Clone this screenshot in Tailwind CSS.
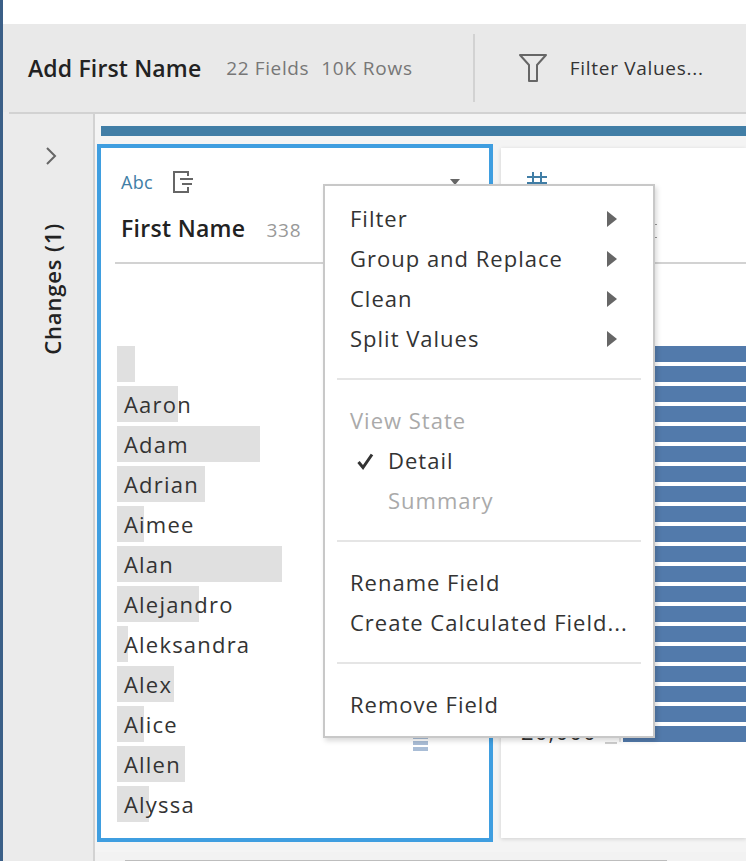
<!DOCTYPE html>
<html lang="en">
<head>
  <meta charset="UTF-8" />
  <title>Add First Name</title>
  <script src="https://cdn.jsdelivr.net/npm/@tailwindcss/browser@4"></script>
</head>
<body class="w-[746px] h-[861px] overflow-hidden bg-white font-['Open_Sans',sans-serif] text-[#333]">
  <div class="relative flex h-full w-full">
    <!-- left edge -->
    <div class="w-[3px] shrink-0 bg-[#3b5f87]"></div>

    <div class="flex min-w-0 flex-1 flex-col">
      <div class="h-6 shrink-0 bg-white"></div>

      <!-- toolbar -->
      <div class="flex h-[88px] shrink-0 items-center bg-[#e9e9e9] pl-[25px] whitespace-nowrap">
        <span class="text-[23px] leading-none font-semibold tracking-[0.15px] text-[#222]">Add First Name</span>
        <span class="ml-[25px] text-[19px] tracking-[0.6px] text-[#777]">22 Fields</span>
        <span class="ml-3 text-[19px] tracking-[0.8px] text-[#777]">10K Rows</span>
        <div class="ml-[60px] h-[68px] w-0.5 bg-[#d2d2d2]"></div>
        <svg class="ml-11 h-7 w-7" viewBox="0 0 28 28" fill="none" stroke="#666" stroke-width="2" stroke-linejoin="round"><path d="M1 1h26L18 11v16h-8V11z"/></svg>
        <span class="ml-[23px] text-[19px] tracking-[0.7px] text-[#333]">Filter Values...</span>
      </div>

      <div class="flex min-h-0 flex-1 bg-[#ebebeb]">
        <!-- changes rail -->
        <div class="ml-1.5 flex w-[86px] shrink-0 flex-col items-center border-t-2 border-r-2 border-[#d2d2d2] pt-[33px]">
          <svg class="h-[18px] w-3" viewBox="0 0 12 18" fill="none" stroke="#666" stroke-width="2"><path d="M2 1l8 8-8 8"/></svg>
          <span class="ml-0.5 mt-[58px] text-[22px] leading-none font-semibold tracking-[0.85px] text-[#222] whitespace-nowrap [writing-mode:vertical-rl] rotate-180">Changes (1)</span>
        </div>

        <!-- profile pane -->
        <div class="flex min-w-0 flex-1 flex-col border-t-2 border-[#d2d2d2] bg-[#f4f4f4]">
          <div class="ml-1.5 mt-3 h-2.5 shrink-0 bg-[#417ea6]"></div>
          <div class="mt-2 flex gap-2 pl-[2px]">
            <!-- First Name card -->
            <div class="relative h-[698px] w-[396px] shrink-0 border-4 border-[#3f9ee0] bg-white">
              <div class="flex h-[114px] flex-col pl-5 pr-[29px]">
                <div class="mt-[23px] flex h-[22px] items-center">
                  <span class="text-[18px] leading-none tracking-[0.3px] text-[#417ea6]">Abc</span>
                  <svg class="ml-5 h-[22px] w-[21px]" viewBox="0 0 21 22" fill="none" stroke="#666" stroke-width="2"><path d="M15 5V1H1v20h14v-5M7 8h13M9 13h10"/></svg>
                  <div class="ml-auto h-0 w-0 border-x-[5px] border-t-[6px] border-x-transparent border-t-[#666]"></div>
                </div>
                <div class="mt-6 flex items-baseline whitespace-nowrap">
                  <span class="text-[23px] leading-none font-semibold tracking-[0.3px] text-[#222]">First Name</span>
                  <span class="ml-[21px] text-[19px] leading-none tracking-[0.8px] text-[#999]">338</span>
                </div>
              </div>
              <div class="mx-3.5 h-0.5 bg-[#d2d2d2]"></div>
              <div class="mt-[82px] flex flex-col gap-1 pl-4 text-[22px] leading-none tracking-[1.2px]">
                <div class="h-9 w-[18px] bg-[#e0e0e0]"></div>
                <div class="relative h-9 w-[61px] bg-[#e0e0e0]"><span class="absolute left-[7px] top-[7px]">Aaron</span></div>
                <div class="relative h-9 w-[143px] bg-[#e0e0e0]"><span class="absolute left-[7px] top-[7px]">Adam</span></div>
                <div class="relative h-9 w-[88px] bg-[#e0e0e0]"><span class="absolute left-[7px] top-[7px]">Adrian</span></div>
                <div class="relative h-9 w-[27px] bg-[#e0e0e0]"><span class="absolute left-[7px] top-[7px]">Aimee</span></div>
                <div class="relative h-9 w-[165px] bg-[#e0e0e0]"><span class="absolute left-[7px] top-[7px]">Alan</span></div>
                <div class="relative h-9 w-[82px] bg-[#e0e0e0]"><span class="absolute left-[7px] top-[7px]">Alejandro</span></div>
                <div class="relative h-9 w-[11px] bg-[#e0e0e0]"><span class="absolute left-[7px] top-[7px]">Aleksandra</span></div>
                <div class="relative h-9 w-[57px] bg-[#e0e0e0]"><span class="absolute left-[7px] top-[7px]">Alex</span></div>
                <div class="relative h-9 w-[27px] bg-[#e0e0e0]"><span class="absolute left-[7px] top-[7px]">Alice</span></div>
                <div class="relative h-9 w-[68px] bg-[#e0e0e0]"><span class="absolute left-[7px] top-[7px]">Allen</span></div>
                <div class="relative h-9 w-8 bg-[#e0e0e0]"><span class="absolute left-[7px] top-[7px]">Alyssa</span></div>
              </div>
              <!-- scroll marker, top of it sits behind the menu -->
              <div class="absolute left-[312px] top-[587px] flex w-[15px] flex-col gap-0.5">
                <div class="h-1 bg-[#a9bdd6]"></div>
                <div class="h-1 bg-[#a9bdd6]"></div>
                <div class="h-1 bg-[#a9bdd6]"></div>
              </div>
            </div>

            <!-- next card, mostly behind the menu -->
            <div class="relative mt-1 h-[690px] flex-1 bg-white shadow-[0_1px_4px_rgba(0,0,0,0.15)]">
              <svg class="ml-[26px] mt-[24px] h-5 w-5" viewBox="0 0 20 20" fill="none" stroke="#417ea6" stroke-width="2"><path d="M6 0v20M14 0v20M0 5h20M0 11h20"/></svg>
              <div class="absolute left-[154px] top-[76px] h-px w-0.5 bg-[#999]"></div>
              <div class="absolute left-[154px] top-[89px] h-px w-0.5 bg-[#999]"></div>
              <div class="absolute inset-x-0 top-[114px] h-0.5 bg-[#d2d2d2]"></div>
              <div class="absolute inset-x-0 top-[198px] flex flex-col gap-1 pl-[122px]">
                <div class="h-4 bg-[#527aab]"></div>
                <div class="h-4 bg-[#527aab]"></div>
                <div class="h-4 bg-[#527aab]"></div>
                <div class="h-4 bg-[#527aab]"></div>
                <div class="h-4 bg-[#527aab]"></div>
                <div class="h-4 bg-[#527aab]"></div>
                <div class="h-4 bg-[#527aab]"></div>
                <div class="h-4 bg-[#527aab]"></div>
                <div class="h-4 bg-[#527aab]"></div>
                <div class="h-4 bg-[#527aab]"></div>
                <div class="h-4 bg-[#527aab]"></div>
                <div class="h-4 bg-[#527aab]"></div>
                <div class="h-4 bg-[#527aab]"></div>
                <div class="h-4 bg-[#527aab]"></div>
                <div class="h-4 bg-[#527aab]"></div>
                <div class="h-4 bg-[#527aab]"></div>
                <div class="h-4 bg-[#527aab]"></div>
                <div class="h-4 bg-[#527aab]"></div>
                <div class="h-4 bg-[#527aab]"></div>
                <div class="h-4 bg-[#527aab]"></div>
              </div>
              <span class="absolute left-5 top-[572px] text-[22px] leading-none tracking-[1.2px]">20,000</span>
              <div class="absolute left-[104px] top-[594px] h-0.5 w-3 bg-[#cfcfcf]"></div>
              <div class="absolute left-[118px] top-[586px] h-2 w-0.5 bg-[#e5e5e5]"></div>
            </div>
          </div>
          <div class="mt-auto h-[9px] bg-[#f2f2f2] pl-[30px]">
            <div class="mt-2 h-px w-[542px] bg-[#bdbdbd]"></div>
          </div>
        </div>
      </div>
    </div>

    <!-- context menu -->
    <div class="absolute left-[323px] top-[184px] w-[332px] border-2 border-[#c8c8c8] bg-white pt-3 pb-3 text-[22px] leading-[40px] tracking-[1px] whitespace-nowrap text-[#333] shadow-[2px_3px_5px_rgba(0,0,0,0.15)]">
      <div class="flex items-center justify-between pl-[25px] pr-[36px]">Filter<div class="mt-0.5 h-0 w-0 border-y-[8px] border-l-[10px] border-y-transparent border-l-[#666]"></div></div>
      <div class="flex items-center justify-between pl-[25px] pr-[36px]">Group and Replace<div class="mt-0.5 h-0 w-0 border-y-[8px] border-l-[10px] border-y-transparent border-l-[#666]"></div></div>
      <div class="flex items-center justify-between pl-[25px] pr-[36px]">Clean<div class="mt-0.5 h-0 w-0 border-y-[8px] border-l-[10px] border-y-transparent border-l-[#666]"></div></div>
      <div class="flex items-center justify-between pl-[25px] pr-[36px]">Split Values<div class="mt-0.5 h-0 w-0 border-y-[8px] border-l-[10px] border-y-transparent border-l-[#666]"></div></div>
      <div class="mx-3 mt-5 mb-5 h-0.5 bg-[#e5e5e5]"></div>
      <div class="pl-[25px] text-[#aaa]">View State</div>
      <div class="relative pl-[63px]">
        <svg class="absolute left-8 top-[13px] h-[17px] w-[17px]" viewBox="0 0 17 17" fill="none" stroke="#333" stroke-width="3"><path d="M1.5 9l4.5 5.5L15 1.5"/></svg>
        Detail
      </div>
      <div class="pl-[63px] text-[#aaa]">Summary</div>
      <div class="mx-3 mt-5 mb-5 h-0.5 bg-[#e5e5e5]"></div>
      <div class="pl-[25px]">Rename Field</div>
      <div class="pl-[25px]">Create Calculated Field...</div>
      <div class="mx-3 mt-5 mb-5 h-0.5 bg-[#e5e5e5]"></div>
      <div class="pl-[25px]">Remove Field</div>
    </div>
  </div>
</body>
</html>
